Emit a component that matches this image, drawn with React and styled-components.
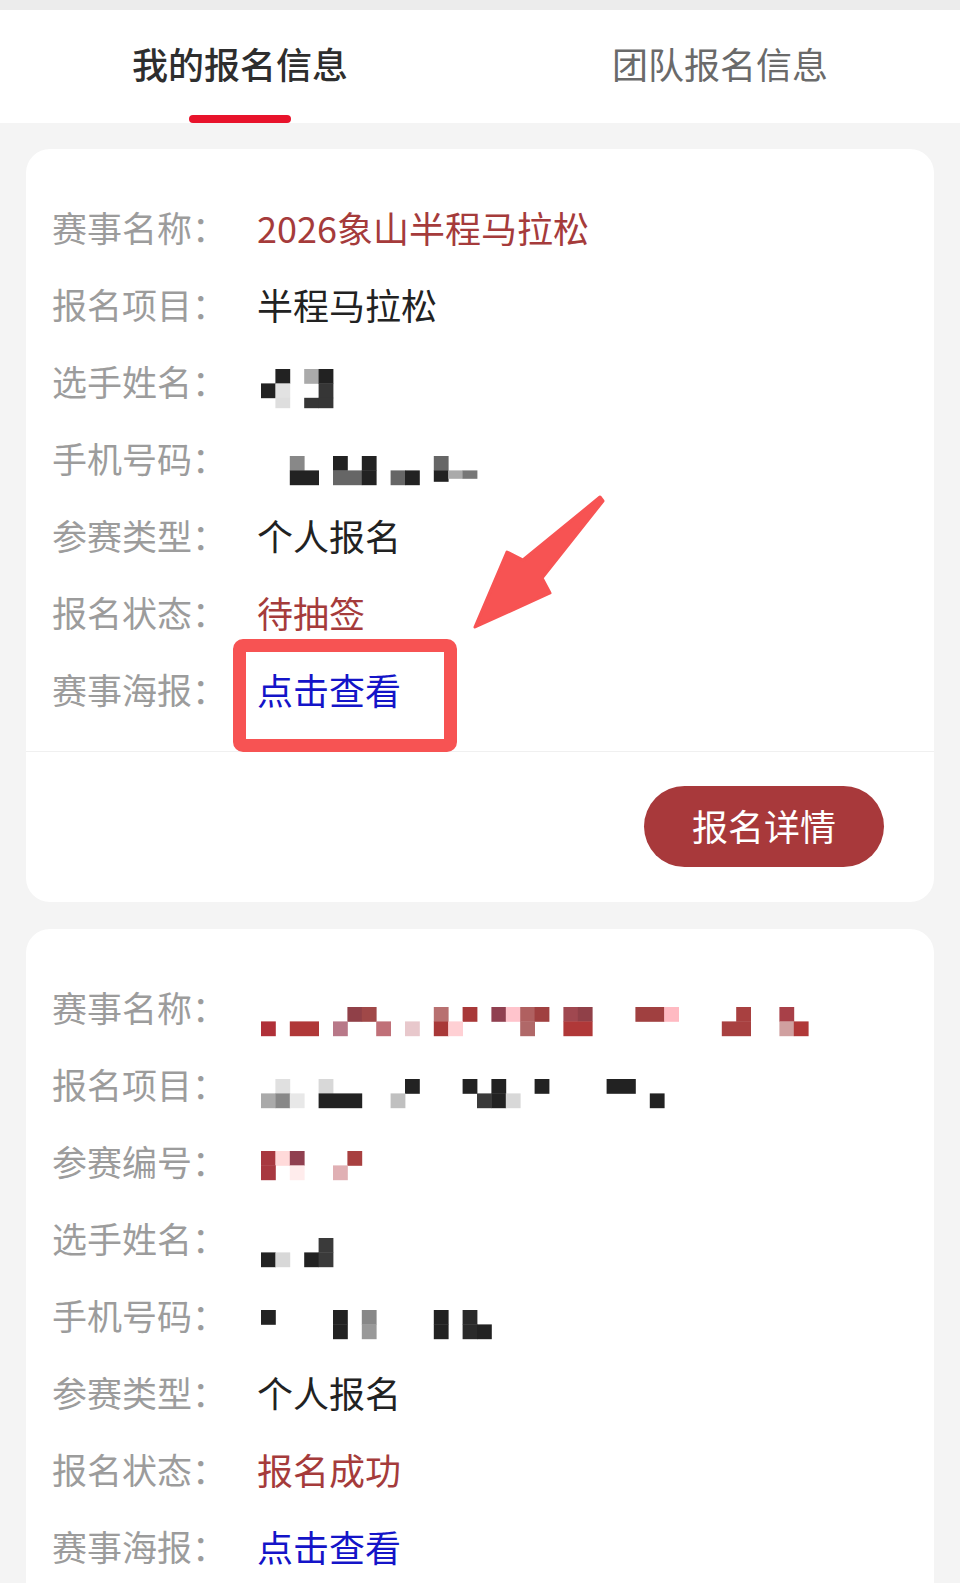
import React from 'react';
import styled, { createGlobalStyle } from 'styled-components';

const GlobalStyle = createGlobalStyle`
  html, body {
    margin: 0;
    padding: 0;
    background: #f4f4f4;
    font-family: "Noto Sans CJK SC", "Noto Sans", sans-serif;
  }
  * { box-sizing: border-box; }
`;

const CELL = 14.4;

// redacted (pixelated) values: [col, row, color, span, height]
const nameA = { top: 24, cells: [
  [1, 0, '#222'], [0, 1, '#222'], [1, 1, '#e2e2e2'], [1, 2, '#dedede', 1, 10],
  [3, 0, '#aaa'], [4, 0, '#222'], [4, 1, '#363636'], [3, 2, '#363636', 1, 10], [4, 2, '#363636', 1, 10],
] };
const phoneA = { top: 34, cells: [
  [2, 0, '#888'], [2, 1, '#222', 2], [5, 0, '#222'], [5, 1, '#666', 2], [7, 0, '#222'], [7, 1, '#222'],
  [9, 1, '#666'], [10, 1, '#222'], [12, 0, '#666'], [12, 1, '#222', 1, 11],
  [13, 1, '#aaa', 1, 8], [14, 1, '#777', 1, 8],
] };
const eventB = { top: 36, cells: [
  [6, 0, '#904048'], [7, 0, '#a04848'], [12, 0, '#b87070'], [14, 0, '#a83838'], [16, 0, '#904050'],
  [17, 0, '#ffc4cc'], [18, 0, '#b06060'], [19, 0, '#a04040'], [21, 0, '#a04850'], [22, 0, '#904048'],
  [26, 0, '#a04040', 2], [28, 0, '#ffbac2'], [33, 0, '#a84040'], [36, 0, '#a84048'],
  [0, 1, '#b03038'], [2, 1, '#b03838', 2], [5, 1, '#b87888'], [8, 1, '#c07078'], [10, 1, '#e8c8cc'],
  [12, 1, '#a83838'], [13, 1, '#ffd0d4'], [18, 1, '#b06868'], [21, 1, '#b03838', 2],
  [32, 1, '#a84040', 2], [36, 1, '#d0a0a0'], [37, 1, '#b03838'],
] };
const projectB = { top: 31, cells: [
  [1, 0, '#e0e0e0'], [4, 0, '#d8d8d8'], [10, 0, '#222'], [14, 0, '#222'], [16, 0, '#222'],
  [19, 0, '#222'], [24, 0, '#222', 2],
  [0, 1, '#aaa'], [1, 1, '#888'], [2, 1, '#e8e8e8'], [4, 1, '#222', 3], [9, 1, '#c0c0c0'],
  [15, 1, '#3a3a3a'], [16, 1, '#222'], [17, 1, '#d8d8d8'], [27, 1, '#222'],
] };
const numberB = { top: 26, cells: [
  [0, 0, '#a83840'], [1, 0, '#ffdada'], [2, 0, '#904050'], [6, 0, '#a84040'],
  [0, 1, '#a83840'], [2, 1, '#ffecec'], [5, 1, '#e0b0b4'],
] };
const nameB = { top: 36, cells: [
  [4, 0, '#3a3a3a'], [0, 1, '#222'], [1, 1, '#d8d8d8'], [3, 1, '#222'], [4, 1, '#3a3a3a'],
] };
const phoneB = { top: 31, cells: [
  [0, 0, '#222'], [5, 0, '#222'], [5, 1, '#222'], [7, 0, '#888'], [7, 1, '#999'],
  [12, 0, '#222'], [12, 1, '#222'], [14, 0, '#2a2a2a'], [14, 1, '#2a2a2a'], [15, 1, '#222'],
] };

const cards = [
  {
    rows: [
      { label: '赛事名称', text: '2026象山半程马拉松', tone: 'red' },
      { label: '报名项目', text: '半程马拉松' },
      { label: '选手姓名', mosaic: nameA },
      { label: '手机号码', mosaic: phoneA },
      { label: '参赛类型', text: '个人报名' },
      { label: '报名状态', text: '待抽签', tone: 'red' },
      { label: '赛事海报', text: '点击查看', tone: 'link' },
    ],
    footer: true,
    marked: true,
  },
  {
    rows: [
      { label: '赛事名称', mosaic: eventB },
      { label: '报名项目', mosaic: projectB },
      { label: '参赛编号', mosaic: numberB },
      { label: '选手姓名', mosaic: nameB },
      { label: '手机号码', mosaic: phoneB },
      { label: '参赛类型', text: '个人报名' },
      { label: '报名状态', text: '报名成功', tone: 'red' },
      { label: '赛事海报', text: '点击查看', tone: 'link' },
    ],
  },
];

const Mosaic = ({ data }) => (
  <MosaicSvg width="600" height="77" viewBox="0 0 600 77">
    {data.cells.map(([c, r, color, span = 1, h = CELL], i) => (
      <rect
        key={i}
        x={4 + c * CELL}
        y={data.top + r * CELL}
        width={span * CELL + 0.4}
        height={h + 0.4}
        fill={color}
      />
    ))}
  </MosaicSvg>
);

const Arrow = () => (
  <ArrowSvg width="140" height="145" viewBox="0 0 140 145">
    <polygon
      points="130,7 53,70 37,62 5,137 80,103 72,88 133,11"
      fill="#f75353"
      stroke="#f75353"
      strokeWidth="3"
      strokeLinejoin="round"
    />
  </ArrowSvg>
);

const App = () => {
  return (
    <Page>
      <GlobalStyle />
      <TopStrip />
      <Tabs>
        <Tab $active>
          <TabText>我的报名信息</TabText>
          <Indicator />
        </Tab>
        <Tab>
          <TabText>团队报名信息</TabText>
        </Tab>
      </Tabs>
      <List>
        {cards.map((card, ci) => (
          <Card key={ci}>
            <Fields>
              {card.rows.map((row, ri) => (
                <Row key={ri}>
                  <Label>{row.label}：</Label>
                  {row.mosaic ? (
                    <Mosaic data={row.mosaic} />
                  ) : (
                    <Value $tone={row.tone}>{row.text}</Value>
                  )}
                </Row>
              ))}
            </Fields>
            {card.footer && (
              <Footer>
                <DetailButton>报名详情</DetailButton>
              </Footer>
            )}
            {card.marked && (
              <>
                <Highlight />
                <Arrow />
              </>
            )}
          </Card>
        ))}
      </List>
    </Page>
  );
};

export default App;

const Page = styled.div`
  height: 100vh;
  overflow: hidden;
  background: #f4f4f4;
`;

const TopStrip = styled.div`
  height: 10px;
  background: #ececec;
`;

const Tabs = styled.div`
  display: flex;
  height: 113px;
  background: #fff;
`;

const Tab = styled.div`
  flex: 1;
  display: flex;
  flex-direction: column;
  align-items: center;
  padding-top: 35px;
  color: ${(p) => (p.$active ? '#2e2e2e' : '#6a6a6a')};
  font-weight: ${(p) => (p.$active ? 500 : 400)};
`;

const TabText = styled.div`
  font-size: 36px;
  line-height: 36px;
`;

const Indicator = styled.div`
  margin-top: auto;
  width: 102px;
  height: 8px;
  border-radius: 4px;
  background: #e8132b;
`;

const List = styled.div`
  display: flex;
  flex-direction: column;
  gap: 27px;
  padding: 26px 26px 0;
`;

const Card = styled.div`
  position: relative;
  background: #fff;
  border-radius: 24px;
`;

const Fields = styled.div`
  padding: 42px 26px 21px;
`;

const Row = styled.div`
  display: flex;
  align-items: center;
  height: 77px;
`;

const Label = styled.div`
  width: 205px;
  flex-shrink: 0;
  padding-bottom: 6px;
  font-size: 35px;
  color: #9c9c9c;
  white-space: nowrap;
`;

const toneColor = { red: '#a53b3b', link: '#1414c8' };

const Value = styled.div`
  padding-bottom: 6px;
  font-size: 36px;
  color: ${(p) => toneColor[p.$tone] || '#222'};
  white-space: nowrap;
`;

const MosaicSvg = styled.svg`
  display: block;
  align-self: stretch;
`;

const Footer = styled.div`
  display: flex;
  justify-content: flex-end;
  padding: 34px 50px 35px;
  border-top: 1px solid #f0f0f0;
`;

const DetailButton = styled.button`
  width: 240px;
  height: 81px;
  border: none;
  border-radius: 41px;
  background: #a8393b;
  color: #fff;
  font-family: inherit;
  font-size: 36px;
  padding: 0 0 4px;
`;

const Highlight = styled.div`
  position: absolute;
  left: 207px;
  top: 490px;
  width: 224px;
  height: 113px;
  border: 13px solid #f75353;
  border-radius: 10px;
  pointer-events: none;
`;

const ArrowSvg = styled.svg`
  position: absolute;
  left: 444px;
  top: 341px;
  pointer-events: none;
`;
